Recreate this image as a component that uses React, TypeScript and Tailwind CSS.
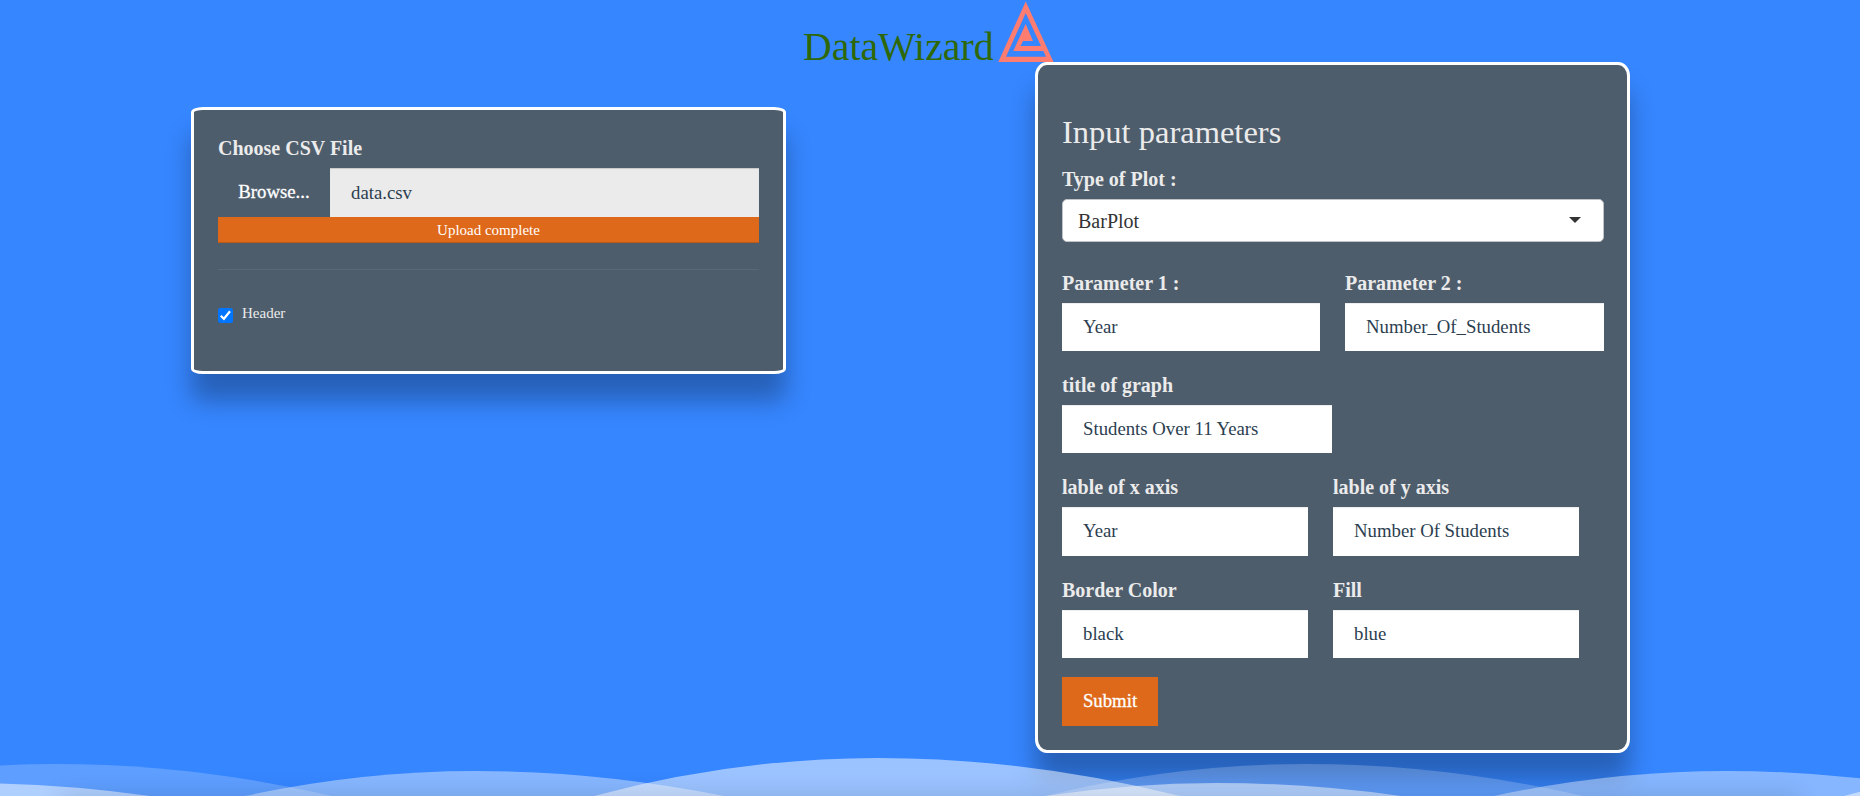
import React from "react";

function Field({ label, value, className }: { label: string; value: string; className: string }) {
  return (
    <label className={`flex flex-col ${className}`}>
      <span className="h-[32px] text-[20px] leading-[25px] font-bold whitespace-nowrap text-[#ebebeb]">{label}</span>
      <input
        className="h-[48.3px] w-full bg-white px-[21px] text-[18.75px] text-[#2b3e50] shadow-[inset_0_1px_1px_rgba(0,0,0,0.075)] outline-none"
        defaultValue={value}
      />
    </label>
  );
}

const waves = [
  { left: -213, peak: 56, right: 332, top: 764, opacity: 0.2 },
  { left: 1045, peak: 1306, right: 1583, top: 764, opacity: 0.2 },
  { left: 245, peak: 476, right: 724, top: 771, opacity: 0.4 },
  { left: 1494, peak: 1726, right: 1974, top: 771, opacity: 0.4 },
  { left: 594, peak: 878, right: 1180, top: 758, opacity: 0.5 },
  { left: 1844, peak: 2128, right: 2430, top: 758, opacity: 0.5 },
  { left: -205, peak: -33, right: 150, top: 783, opacity: 0.5 },
  { left: 1045, peak: 1217, right: 1401, top: 783, opacity: 0.5 },
];

export default function App() {
  return (
    <div className="relative flex h-[796px] w-[1860px] flex-col overflow-hidden bg-[#3686ff] font-['Liberation_Serif',serif]">
      <header className="flex h-[62px] pl-[803px]">
        <h1 className="mt-[24px] w-[195px] text-[39.8px] leading-[46px] whitespace-nowrap text-[#2e6809]">DataWizard</h1>
        <svg className="h-[62px] w-[56px]" viewBox="998 0 56 62">
          <path fill="#ff7c70" fillRule="evenodd" d="M1025.7 1.5 L1053.5 62 H998.3Z M1025.7 13 L1006 56.7 H1046 L1043.3 51 H1013.3 L1025.7 24 L1033 41 H1023 L1020.5 46 H1041Z" />
        </svg>
      </header>

      <main className="flex items-start pl-[191px]">
        <section className="mt-[45px] h-[267px] w-[595px] rounded-[2%] border-3 border-white bg-[#4e5d6c] px-[24px] pt-[25px] shadow-[0_27px_24px_rgba(0,0,0,0.28)]">
          <div className="h-[33px] text-[20px] leading-[27px] font-bold text-[#ebebeb]">Choose CSV File</div>
          <div className="flex h-[49px]">
            <button className="w-[112px] text-[18.75px] text-white [-webkit-text-stroke:0.3px_white]">Browse...</button>
            <div className="flex flex-1 items-center bg-[#ebebeb] pl-[21px] text-[18.75px] leading-[30px] text-[#2b3e50] shadow-[inset_0_1px_1px_rgba(0,0,0,0.15)]">data.csv</div>
          </div>
          <div className="h-[26px] bg-[#df691a] text-center text-[15px] leading-[26px] text-white shadow-[inset_0_-1px_0_rgba(0,0,0,0.15)]">Upload complete</div>
          <hr className="mt-[26px] border-[#596877]" />
          <label className="mt-[33px] flex h-[20px] items-start text-[15px] leading-[20px] text-[#ebebeb]">
            <svg className="mt-[5px] mr-[9px] h-[15px] w-[15px]" viewBox="0 0 15 15">
              <rect width="15" height="15" rx="2.5" fill="#0075ff" />
              <path d="M2.8 7.8 L5.9 10.8 L12 3.2" fill="none" stroke="white" strokeWidth="2.2" />
            </svg>
            Header
          </label>
        </section>

        <section className="ml-[249px] h-[691px] w-[595px] rounded-[2%] border-3 border-white bg-[#4e5d6c] pr-[23px] pl-[24px] pt-[47px] shadow-[0_27px_24px_rgba(0,0,0,0.28)]">
          <h2 className="h-[54px] text-[32.5px] leading-[40px] text-[#ebebeb]">Input parameters</h2>
          <div className="h-[33px] text-[20px] leading-[27px] font-bold text-[#ebebeb]">Type of Plot :</div>
          <div className="flex h-[43px] items-center justify-between rounded-[5px] border border-[#bfc3c8] bg-white pr-[22px] pl-[15px] text-[20px] leading-[40px] text-[#333]">
            BarPlot
            <svg className="-mt-px h-[6px] w-[12px]" viewBox="0 0 12 6"><path d="M0 0H12L6 6Z" fill="#333" /></svg>
          </div>
          <div className="mt-[28.7px] flex gap-[25px]">
            <Field label="Parameter 1 :" value="Year" className="w-[258px]" />
            <Field label="Parameter 2 :" value="Number_Of_Students" className="w-[259px]" />
          </div>
          <div className="mt-[22px] flex">
            <Field label="title of graph" value="Students Over 11 Years" className="w-[270px]" />
          </div>
          <div className="mt-[22px] flex gap-[25px]">
            <Field label="lable of x axis" value="Year" className="w-[246px]" />
            <Field label="lable of y axis" value="Number Of Students" className="w-[246px]" />
          </div>
          <div className="mt-[22px] flex gap-[25px]">
            <Field label="Border Color" value="black" className="w-[246px]" />
            <Field label="Fill" value="blue" className="w-[246px]" />
          </div>
          <button className="mt-[18.8px] h-[49px] w-[96px] bg-[#df691a] text-[18.75px] text-white [-webkit-text-stroke:0.3px_white]">Submit</button>
        </section>
      </main>

      <svg className="pointer-events-none absolute inset-0 h-full w-full" viewBox="0 0 1860 796">
        {waves.map((w) => (
          <path
            key={w.peak}
            d={`M${w.left} 796 Q${(w.left + w.peak) / 2} ${w.top} ${w.peak} ${w.top} Q${(w.right + w.peak) / 2} ${w.top} ${w.right} 796Z`}
            fill="white"
            fillOpacity={w.opacity}
          />
        ))}
      </svg>
      <div className="pointer-events-none absolute inset-x-[60px] top-full h-[20px] shadow-[0_0_24px_rgba(0,0,0,0.14)]" />
    </div>
  );
}
